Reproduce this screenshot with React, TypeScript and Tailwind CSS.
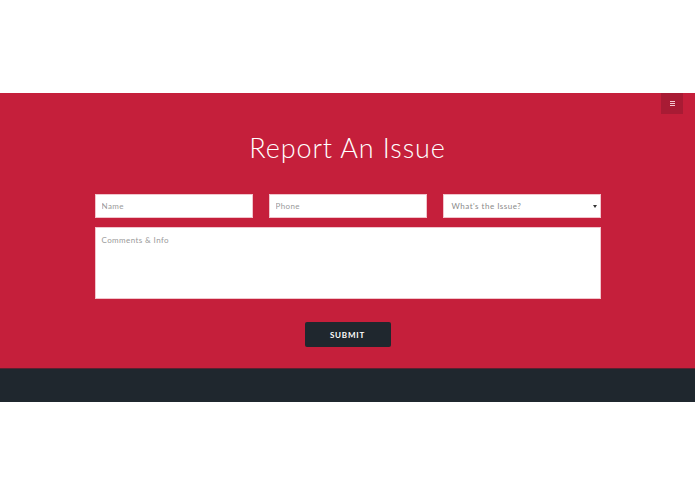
import * as React from "react";

export default function App() {
  return (
    <div className="min-h-screen bg-white font-['Lato','Open_Sans',sans-serif]">
      <div className="h-[93px]" />

      {/* Report section */}
      <section className="relative bg-[#c51f3b] h-[275px] flex flex-col items-center">
        <button
          aria-label="Menu"
          className="absolute right-[12px] top-0 w-[22px] h-[21px] bg-[#a81b34] flex items-center justify-center"
        >
          <span className="flex flex-col gap-[1px]">
            <span className="block w-[5px] h-[1px] bg-[#f4c7cf]" />
            <span className="block w-[5px] h-[1px] bg-[#f4c7cf]" />
            <span className="block w-[5px] h-[1px] bg-[#f4c7cf]" />
          </span>
        </button>

        <h2 className="mt-[40px] h-[30px] leading-[30px] text-[27px] font-light text-white tracking-[0.9px]">
          Report An Issue
        </h2>

        <form className="mt-[31px] w-[506px] flex flex-col" onSubmit={(e) => e.preventDefault()}>
          <div className="grid grid-cols-3 gap-[16px]">
            <input
              placeholder="Name"
              className="h-[24px] bg-white border border-[#f1c4cc] px-[6px] text-[8px] tracking-[0.4px] text-gray-600 placeholder:text-[#9a9a9a] outline-none"
            />
            <input
              placeholder="Phone"
              className="h-[24px] bg-white border border-[#f1c4cc] px-[6px] text-[8px] tracking-[0.4px] text-gray-600 placeholder:text-[#9a9a9a] outline-none"
            />
            <div className="relative h-[24px] bg-white border border-[#f1c4cc] flex items-center px-[8px]">
              <span className="text-[8px] text-[#8a8a8a] tracking-[0.5px]">What's the Issue?</span>
              <span className="absolute right-[3px] top-[10px] w-0 h-0 border-l-[2px] border-r-[2px] border-t-[3px] border-l-transparent border-r-transparent border-t-[#333]" />
            </div>
          </div>

          <textarea
            placeholder="Comments & Info"
            className="mt-[9px] h-[72px] bg-white border border-[#f1c4cc] px-[6px] py-[6px] text-[8px] tracking-[0.4px] text-gray-600 placeholder:text-[#9a9a9a] outline-none resize-none"
          />

          <div className="flex justify-center mt-[23px]">
            <button
              type="submit"
              className="w-[86px] h-[25px] rounded-[2px] bg-[#1f272e] text-white text-[8px] font-bold tracking-[0.8px]"
            >
              SUBMIT
            </button>
          </div>
        </form>
      </section>

      <footer className="h-[34px] bg-[#1f272e] border-t border-[#5a2030]" />
    </div>
  );
}
